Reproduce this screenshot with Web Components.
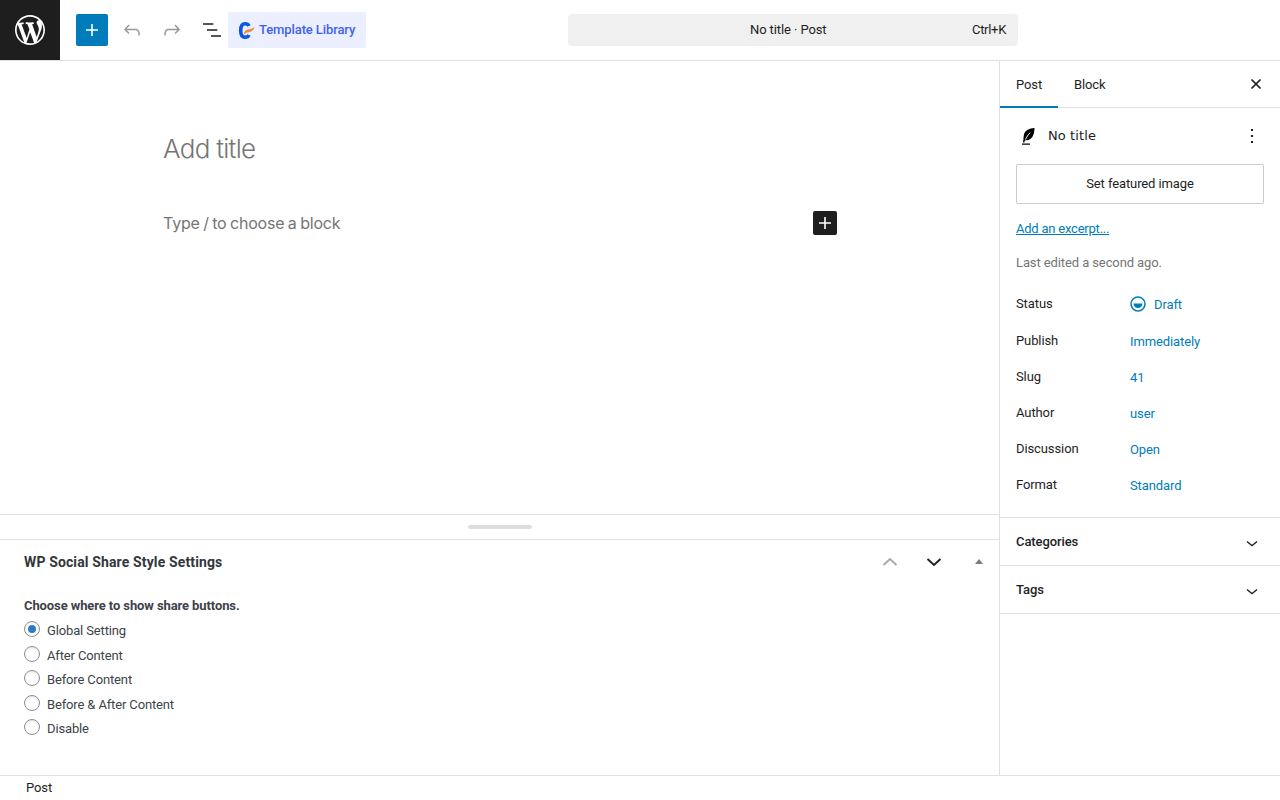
<!DOCTYPE html>
<html lang="en">
<head>
<meta charset="utf-8">
<title>Add New Post</title>
<style>
  html, body { margin: 0; height: 100%; background: #fff; }
  body { font: 13px/1.4 Roboto, "Liberation Sans", sans-serif; letter-spacing: -.1px; color: #1e1e1e; overflow: hidden; }
  wp-editor { height: 800px; }
</style>
</head>
<body>

<wp-editor>
  <wp-header slot="header"></wp-header>
  <wp-canvas slot="canvas"></wp-canvas>
  <wp-metabox slot="meta"></wp-metabox>
  <wp-sidebar slot="sidebar">
    <wp-row label="Status" value="Draft" icon="draft"></wp-row>
    <wp-row label="Publish" value="Immediately"></wp-row>
    <wp-row label="Slug" value="41"></wp-row>
    <wp-row label="Author" value="user"></wp-row>
    <wp-row label="Discussion" value="Open"></wp-row>
    <wp-row label="Format" value="Standard"></wp-row>
  </wp-sidebar>
  <wp-footer slot="footer">Post</wp-footer>
</wp-editor>

<script>
// gutenberg icon paths, 24 box
const ICONS = {
  plus: 'M18 11.2h-5.2V6h-1.6v5.2H6v1.6h5.2V18h1.6v-5.2H18z',
  undo: 'M18.3 11.7c-.6-.6-1.4-.9-2.3-.9H6.7l2.9-3.3-1.1-1-4.5 5L8.5 16l1-1-2.7-2.7H16c.5 0 .9.2 1.3.5 1 1 1 3.4 1 4.5v.3h1.5v-.2c0-1.5 0-4.3-1.5-5.7z',
  redo: 'M15.6 6.5l-1.1 1 2.9 3.3H8c-.9 0-1.7.3-2.3.9-1.4 1.5-1.4 4.2-1.4 5.6v.2h1.5v-.3c0-1.1 0-3.5 1-4.5.3-.3.7-.5 1.3-.5h9.2L14.5 15l1.1 1.1 4.6-4.6-4.6-5z',
  list: 'M3 5.2h10.3v1.5H3zM7 11.2h10.3v1.5H7zM11 17.2h10v1.5H11z',
  more: 'M13 19h-2v-2h2v2zm0-6h-2v-2h2v2zm0-6h-2V5h2v2z',
  chevron: 'M17.500 10.100L12 14.500l-5.500-4.400.9-1.100L12 12.700l4.600-3.700z'
};
const icon = (name, size = 24) =>
  `<svg width="${size}" height="${size}" viewBox="0 0 24 24" fill="currentColor" aria-hidden="true"><path d="${ICONS[name]}"/></svg>`;

class WpEditor extends HTMLElement {
  constructor() {
    super();
    this.attachShadow({ mode: 'open' }).innerHTML = `
      <style>
        :host { display: grid; grid-template: 61px 1fr 25px / 1fr 280px; }
        .header { grid-column: 1 / 3; }
        .main { display: flex; flex-direction: column; min-height: 0; }
        .side { min-height: 0; }
        .footer { grid-column: 1 / 3; }
      </style>
      <div class="header"><slot name="header"></slot></div>
      <div class="main"><slot name="canvas"></slot><slot name="meta"></slot></div>
      <div class="side"><slot name="sidebar"></slot></div>
      <div class="footer"><slot name="footer"></slot></div>`;
  }
}

class WpHeader extends HTMLElement {
  constructor() {
    super();
    this.attachShadow({ mode: 'open' }).innerHTML = `
      <style>
        :host { display: flex; align-items: center; height: 60px; border-bottom: 1px solid #e0e0e0; }
        .logo { width: 60px; height: 60px; background: #1e1e1e; color: #fff; display: flex; align-items: center; justify-content: center; }
        .add { width: 32px; height: 32px; margin-left: 16px; background: #007cba; color: #fff; border-radius: 2px; display: flex; align-items: center; justify-content: center; }
        .tool { width: 24px; height: 24px; margin-left: 16px; color: #999; }
        .tool.first { margin-left: 12px; }
        .tool.dark { color: #1e1e1e; }
        .tpl { width: 138px; height: 36px; margin-left: 4px; box-sizing: border-box; padding-left: 9px; background: #ebefff; border-radius: 2px; display: flex; align-items: center; gap: 4px; color: #3f62ee; font-weight: 500; font-size: 13px; white-space: nowrap; }
        .tpl span, .cmd span { padding-top: 1px; }
        .cmd { width: 450px; height: 32px; margin-left: 202px; box-sizing: border-box; padding: 0 12px 0 182px; background: #f0f0f0; border-radius: 4px; display: flex; align-items: center; justify-content: space-between; white-space: nowrap; }
        .cmd .k { letter-spacing: -.3px; }
        svg { display: block; }
      </style>
      <div class="logo">
        <svg width="36" height="36" viewBox="-2 -2 24 24" fill="currentColor"><path d="M20 10c0-5.51-4.49-10-10-10C4.48 0 0 4.49 0 10c0 5.52 4.48 10 10 10 5.51 0 10-4.48 10-10zM7.78 15.37L4.37 6.22c.55-.02 1.17-.08 1.17-.08.5-.06.44-1.13-.06-1.11 0 0-1.45.11-2.37.11-.18 0-.37 0-.58-.01C4.12 2.69 6.87 1.11 10 1.11c2.33 0 4.45.87 6.05 2.34-.68-.11-1.65.39-1.65 1.58 0 .74.45 1.36.9 2.1.35.61.55 1.36.55 2.46 0 1.49-1.4 5-1.4 5l-3.03-8.37c.54-.02.82-.17.82-.17.5-.05.44-1.25-.06-1.22 0 0-1.44.12-2.38.12-.87 0-2.33-.12-2.33-.12-.5-.03-.56 1.2-.06 1.22l.92.08 1.26 3.41zM17.41 10c.24-.64.74-1.87.43-4.25.7 1.29 1.05 2.71 1.05 4.25 0 3.29-1.73 6.24-4.4 7.78.97-2.59 1.94-5.2 2.92-7.78zM6.1 18.09C3.12 16.65 1.11 13.53 1.11 10c0-1.3.23-2.48.72-3.59C3.25 10.3 4.67 14.2 6.1 18.09zm4.03-6.63l2.58 6.98c-.86.29-1.76.45-2.71.45-.79 0-1.57-.11-2.29-.33.81-2.38 1.62-4.74 2.42-7.1z"/></svg>
      </div>
      <div class="add">${icon('plus')}</div>
      <div class="tool first">${icon('undo')}</div>
      <div class="tool">${icon('redo')}</div>
      <div class="tool dark">${icon('list')}</div>
      <div class="tpl">
        <svg width="18" height="18" viewBox="0 0 18 18">
          <path d="M12 5C11.200 3.400 9.800 2.800 8 2.800 5 2.800 3.700 5.700 3.700 9.500S5 16.200 8 16.200c1.800 0 3.200-.6 4-2.200" fill="none" stroke="#0a57e0" stroke-width="3.600"/>
          <path d="M6.800 13.600c.2-3.200 1.800-5 4.300-5.200l1.500-.2c1.900-.3 3.500-1.100 5.100-2.400-.7 2.300-1.900 4.100-3.900 4.900-2 .6-4.600.6-7 2.900z" fill="#f08a3c"/>
        </svg>
        <span>Template Library</span>
      </div>
      <div class="cmd"><span>No title · Post</span><span class="k">Ctrl+K</span></div>`;
  }
}

class WpCanvas extends HTMLElement {
  constructor() {
    super();
    this.attachShadow({ mode: 'open' }).innerHTML = `
      <style>
        :host { display: block; height: 453px; box-sizing: border-box; padding: 69px 162px 0 163px; border-right: 1px solid #e0e0e0; }
        .title { font: 300 26px/38px Inter, Roboto, sans-serif; letter-spacing: -.7px; color: #757575; }
        .para { display: flex; align-items: center; justify-content: space-between; margin-top: 43px; height: 24px; font: 400 16px/24px Inter, sans-serif; letter-spacing: -.2px; word-spacing: -.8px; color: #757575; }
        .ins { width: 24px; height: 24px; background: #1e1e1e; color: #fff; border-radius: 2px; }
        svg { display: block; }
      </style>
      <div class="title">Add title</div>
      <div class="para"><span>Type / to choose a block</span><div class="ins">${icon('plus')}</div></div>`;
  }
}

class WpMetabox extends HTMLElement {
  constructor() {
    super();
    const opts = ['Global Setting', 'After Content', 'Before Content', 'Before &amp; After Content', 'Disable'];
    this.attachShadow({ mode: 'open' }).innerHTML = `
      <style>
        :host { display: block; flex: 1; border-right: 1px solid #e0e0e0; color: #3c434a; }
        .handle { height: 24px; border-top: 1px solid #e0e0e0; border-bottom: 1px solid #e0e0e0; display: flex; align-items: center; justify-content: center; }
        .handle i { display: block; width: 64px; height: 4px; border-radius: 2px; background: #ddd; }
        .head { display: flex; align-items: center; height: 44px; padding: 0 8px 0 24px; }
        h2 { margin: 0; flex: 1; font: 700 14px/20px Roboto, sans-serif; letter-spacing: .13px; color: #32373c; }
        .btn { width: 44px; display: flex; justify-content: center; }
        .btn.up { color: #a7aaad; }
        .btn.down { color: #1d2327; }
        .tri { width: 24px; margin-left: 11px; }
        .tri i { display: block; width: 0; height: 0; border: 4.500px solid transparent; border-top: 0; border-bottom: 5px solid #787c82; margin-top: -2px; }
        .body { padding: 13px 24px 0; }
        .lead { font-weight: 700; font-size: 13px; line-height: 18px; color: #3c434a; margin-bottom: 4px; }
        label { display: flex; align-items: center; height: 24.500px; gap: 7px; font-size: 13px; letter-spacing: -.14px; }
        label i { box-sizing: border-box; width: 16px; height: 16px; border: 1px solid #8c8f94; border-radius: 50%; background: #fff; box-shadow: inset 0 1px 2px rgba(0,0,0,.1); display: flex; align-items: center; justify-content: center; position: relative; top: -2px; }
        label.on i::after { content: ''; width: 8px; height: 8px; border-radius: 50%; background: #2b7cc6; }
        svg { display: block; }
      </style>
      <div class="handle"><i></i></div>
      <div class="head">
        <h2>WP Social Share Style Settings</h2>
        <div class="btn up"><svg width="20" height="20" viewBox="0 0 20 20" fill="none" stroke="currentColor" stroke-width="2"><path d="M3.500 13l6.500-6 6.500 6"/></svg></div>
        <div class="btn down"><svg width="20" height="20" viewBox="0 0 20 20" fill="none" stroke="currentColor" stroke-width="2"><path d="M3.500 7l6.500 6 6.500-6"/></svg></div>
        <div class="btn tri"><i></i></div>
      </div>
      <div class="body">
        <div class="lead">Choose where to show share buttons.</div>
        ${opts.map((o, i) => `<label class="${i ? '' : 'on'}"><i></i><span>${o}</span></label>`).join('')}
      </div>`;
  }
}

class WpSidebar extends HTMLElement {
  constructor() {
    super();
    this.attachShadow({ mode: 'open' }).innerHTML = `
      <style>
        :host { display: block; height: 714px; box-sizing: border-box; }
        .tabs { display: flex; height: 47px; box-sizing: border-box; border-bottom: 1px solid #e0e0e0; align-items: stretch; }
        .tab { padding: 0 16px; line-height: 47px; box-sizing: border-box; }
        .tab.on { box-shadow: inset 0 -2px 0 #007cba; height: 47px; width: 58px; }
        .tab.two { width: 64px; }
        .close { margin-left: auto; width: 48px; display: flex; align-items: center; justify-content: center; }
        .close svg, .more svg { display: block; }
        .sum { padding: 16px 16px 0; }
        .ttl { display: flex; align-items: center; height: 24px; margin-bottom: 16px; }
        .ttl .name { flex: 1; margin-left: 8px; font: 13px/24px "DejaVu Sans", sans-serif; letter-spacing: .1px; }
        .feat { height: 40px; box-sizing: border-box; padding-top: 1px; border: 1px solid #ccc; border-radius: 2px; display: flex; align-items: center; justify-content: center; }
        .exc { margin-top: 16px; line-height: 18px; color: #007cba; text-decoration: underline; letter-spacing: -.22px; }
        .edit { margin-top: 16px; line-height: 18px; color: #757575; }
        .rows { margin-top: 16px; }
        .panel { display: flex; justify-content: space-between; padding: 15px 16px 0; height: 32px; border-bottom: 1px solid #e0e0e0; font-weight: 500; line-height: 18px; }
        .panel svg { display: block; margin-top: -1px; }
        .panel.first { border-top: 1px solid #e0e0e0; margin-top: 12px; }
      </style>
      <div class="tabs">
        <div class="tab on">Post</div>
        <div class="tab two">Block</div>
        <div class="close"><svg width="12" height="12" viewBox="0 0 12 12" fill="none" stroke="currentColor" stroke-width="1.700"><path d="M1.500 1.500l9 9M10.500 1.500l-9 9"/></svg></div>
      </div>
      <div class="sum">
        <div class="ttl">
          <svg width="24" height="24" viewBox="0 0 24 24" style="display:block">
            <path d="M6 19.500h8v1.300H6zM18.500 4C13 4.300 9 6.500 8 10.500c-.5 2-.5 4.500-1 8h1.200c.3-1 .6-1.700 1-2.300C13 16.800 16 14.500 17.300 11c.7-2 1.200-4.500 1.200-7z" fill="#000"/>
            <path d="M9.600 15.500c1-2.400 2.300-4.500 4.400-6.800" fill="none" stroke="#fff" stroke-width="1"/>
          </svg>
          <span class="name">No title</span><span class="more">${icon('more')}</span>
        </div>
        <div class="feat">Set featured image</div>
        <div class="exc">Add an excerpt...</div>
        <div class="edit">Last edited a second ago.</div>
        <div class="rows"><slot></slot></div>
      </div>
      <div class="panel first">Categories ${icon('chevron')}</div>
      <div class="panel">Tags ${icon('chevron')}</div>`;
  }
}

class WpRow extends HTMLElement {
  connectedCallback() {
    if (this.shadowRoot) return;
    const draft = this.getAttribute('icon') === 'draft';
    this.attachShadow({ mode: 'open' }).innerHTML = `
      <style>
        :host { display: flex; height: 36px; }
        .l { width: 114px; line-height: 18px; padding-top: 7px; }
        .v { color: #007cba; line-height: 18px; padding-top: 8px; display: flex; gap: 8px; height: 18px; align-items: center; }
        :host([icon]) { height: 37px; }
        svg { display: block; position: relative; top: -1px; }
      </style>
      <span class="l">${this.getAttribute('label')}</span>
      <span class="v">${draft ? `<svg width="16" height="16" viewBox="0 0 16 16"><circle cx="8" cy="8" r="7" fill="none" stroke="currentColor" stroke-width="1.500"/><path d="M3.500 7.500h9A4.500 4.500 0 0 1 3.500 7.500z" fill="currentColor"/></svg>` : ''}${this.getAttribute('value')}</span>`;
  }
}

class WpFooter extends HTMLElement {
  constructor() {
    super();
    this.attachShadow({ mode: 'open' }).innerHTML = `
      <style>
        :host { display: block; height: 24px; border-top: 1px solid #e0e0e0; padding-left: 26px; line-height: 23px; background: #fff; }
      </style>
      <slot></slot>`;
  }
}

customElements.define('wp-editor', WpEditor);
customElements.define('wp-header', WpHeader);
customElements.define('wp-canvas', WpCanvas);
customElements.define('wp-metabox', WpMetabox);
customElements.define('wp-sidebar', WpSidebar);
customElements.define('wp-row', WpRow);
customElements.define('wp-footer', WpFooter);
</script>
</body>
</html>
